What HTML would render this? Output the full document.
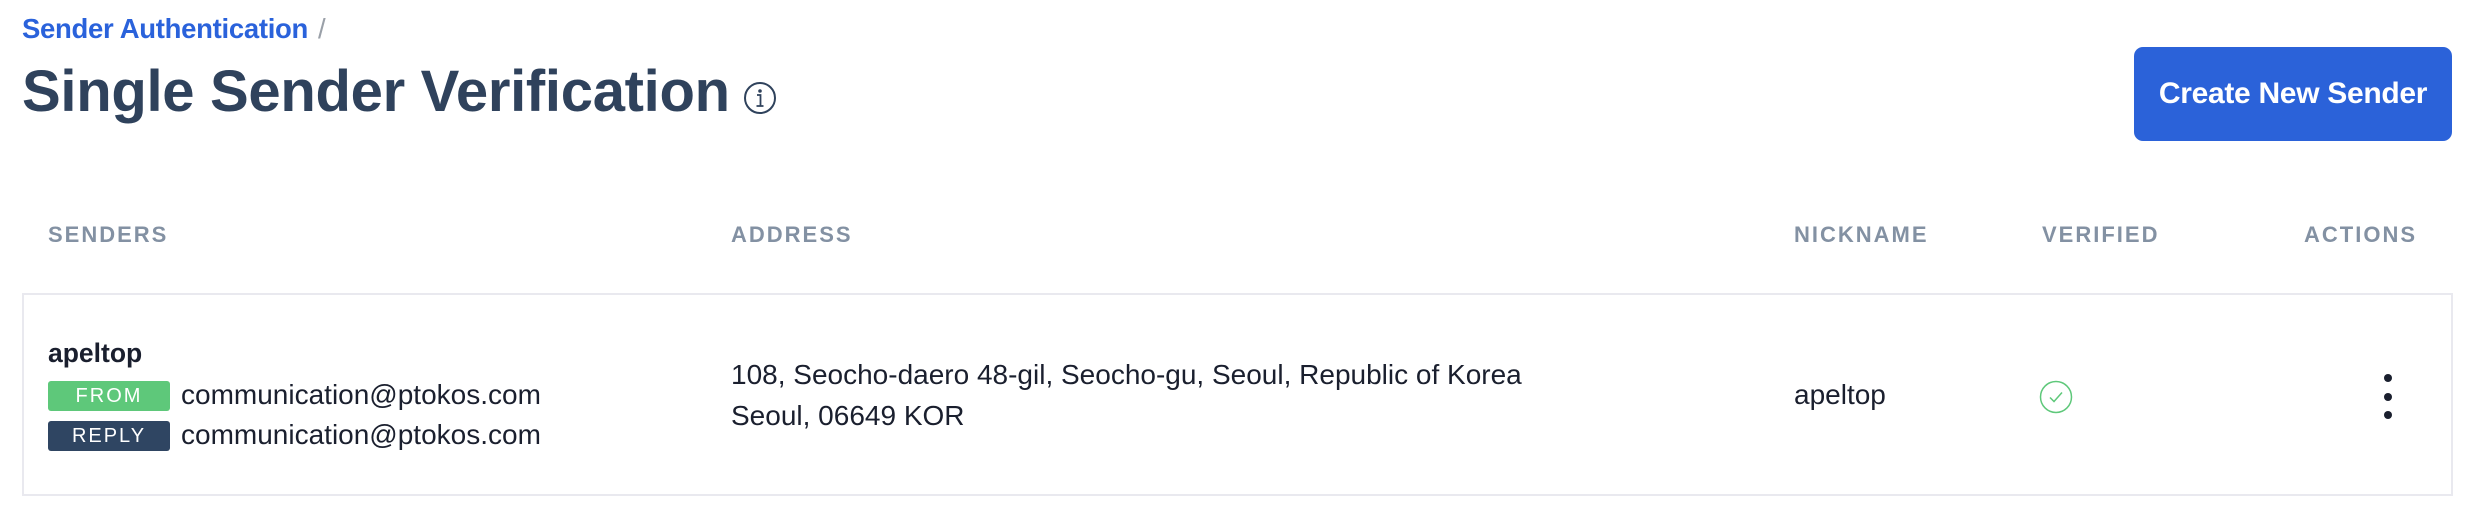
<!DOCTYPE html>
<html><head><meta charset="utf-8"><style>
*{margin:0;padding:0;box-sizing:border-box}
body{width:2478px;height:530px;background:#fff;font-family:"Liberation Sans",sans-serif;position:relative;overflow:hidden;color:#1a1f2e}
.a{position:absolute;white-space:nowrap}
.bc{left:22px;top:13px;font-size:27.5px;font-weight:bold;color:#2a62db;letter-spacing:-0.3px}
.bc span{color:#9aa0a8;font-weight:normal;margin-left:10px}
.title{left:22px;top:58px;font-size:58px;font-weight:bold;color:#2f425c;letter-spacing:-0.3px}
.btn{left:2134px;top:47px;width:318px;height:94px;background:#2b62d9;border-radius:9px;color:#fff;font-weight:bold;font-size:30px;display:flex;align-items:center;justify-content:center;letter-spacing:-0.3px}
.h{top:222px;font-size:22px;font-weight:bold;color:#8391a3;letter-spacing:2px}
.card{left:22px;top:293px;width:2431px;height:203px;border:2px solid #e9e9ef}
.t{font-size:28px;color:#1a1f2e}
.badge{width:122px;height:30px;border-radius:3px;color:#fff;font-size:20px;letter-spacing:2px;display:flex;align-items:center;justify-content:center}
.dot{width:8px;height:8px;border-radius:50%;background:#1a1f2e;left:2384px}
</style></head><body>
<div class="a bc">Sender Authentication<span>/</span></div>
<div class="a title">Single Sender Verification</div>
<svg class="a" style="left:743px;top:81px" width="34" height="34" viewBox="0 0 34 34"><circle cx="17" cy="17" r="15" fill="none" stroke="#2f425c" stroke-width="2"/><circle cx="17" cy="10" r="1.8" fill="#2f425c"/><path d="M14 14h3.5v11M13.5 25h7" fill="none" stroke="#2f425c" stroke-width="1.8"/></svg>
<div class="a btn">Create New Sender</div>
<div class="a h" style="left:48px">SENDERS</div>
<div class="a h" style="left:731px">ADDRESS</div>
<div class="a h" style="left:1794px">NICKNAME</div>
<div class="a h" style="left:2042px">VERIFIED</div>
<div class="a h" style="left:2304px">ACTIONS</div>
<div class="a card"></div>
<div class="a t" style="left:48px;top:338px;font-weight:bold;font-size:26.5px">apeltop</div>
<div class="a badge" style="left:48px;top:381px;background:#5ec87a">FROM</div>
<div class="a t" style="left:181px;top:379px">communication@ptokos.com</div>
<div class="a badge" style="left:48px;top:421px;background:#2f4562">REPLY</div>
<div class="a t" style="left:181px;top:419px">communication@ptokos.com</div>
<div class="a t" style="left:731px;top:359px">108, Seocho-daero 48-gil, Seocho-gu, Seoul, Republic of Korea</div>
<div class="a t" style="left:731px;top:400px">Seoul, 06649 KOR</div>
<div class="a t" style="left:1794px;top:379px">apeltop</div>
<svg class="a" style="left:2039px;top:380px" width="34" height="34" viewBox="0 0 34 34"><circle cx="17" cy="17" r="15.5" fill="none" stroke="#5ec87a" stroke-width="1.5"/><path d="M11 17.5l4 4 8-9" fill="none" stroke="#5ec87a" stroke-width="1.5"/></svg>
<div class="a dot" style="top:374px"></div>
<div class="a dot" style="top:393px"></div>
<div class="a dot" style="top:411px"></div>
</body></html>
